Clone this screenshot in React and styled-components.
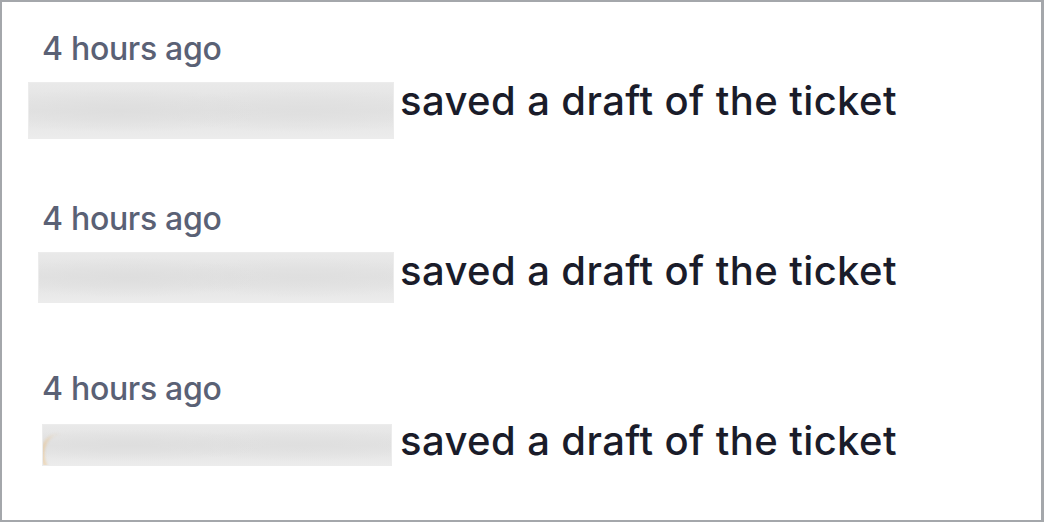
import styled, { createGlobalStyle } from 'styled-components'

const Global = createGlobalStyle`
  html, body {
    margin: 0;
    padding: 0;
    background: #ffffff;
  }
`

const Frame = styled.div`
  box-sizing: border-box;
  width: 1044px;
  height: 522px;
  border: 2px solid #a4a7ab;
  border-right-width: 3px;
  background: #fff;
  padding: 29px 0 0 40px;
  display: flex;
  flex-direction: column;
  overflow: hidden;
  font-family: Inter, "Noto Sans", sans-serif;
`

const Entry = styled.div`
  flex: none;
  height: 170px;
  display: flex;
  flex-direction: column;
`

const Time = styled.div`
  font-size: 32px;
  font-weight: 500;
  line-height: 36px;
  color: #5a6175;
  letter-spacing: -0.3px;
`

const Line = styled.div`
  display: flex;
  align-items: flex-start;
  height: 80px;
`

const Redacted = styled.div`
  position: relative;
  box-sizing: border-box;
  flex: none;
  width: ${p => p.$w}px;
  height: ${p => p.$h}px;
  margin-left: ${p => p.$x}px;
  margin-top: ${p => p.$y}px;
  margin-right: ${p => p.$gap}px;
  border: 1px solid #ececec;
  overflow: hidden;
  background:
    radial-gradient(ellipse 40% 40% at 25% 50%, #dedede, transparent),
    radial-gradient(ellipse 40% 40% at 75% 50%, #dfdfdf, transparent),
    linear-gradient(#e9e9e9, #e2e2e2 50%, #ececec);

  &::before {
    content: "";
    display: ${p => (p.$tint ? 'block' : 'none')};
    position: absolute;
    left: -2px;
    top: 9px;
    width: 34px;
    height: 40px;
    border-radius: 50%;
    border-left: 3px solid rgba(240, 172, 80, 0.45);
    filter: blur(1.5px);
  }
`

const Action = styled.div`
  font-size: 40px;
  font-weight: 500;
  line-height: 48px;
  color: #1a1c2a;
  letter-spacing: 0.4px;
  margin-top: 10px;
  white-space: nowrap;
`

const entries = [
  { x: -14, y: 15, w: 366, h: 57, gap: 6 },
  { x: -4, y: 15, w: 356, h: 51, gap: 6 },
  { x: 0, y: 17, w: 350, h: 42, gap: 8, tint: true },
]

export default function App() {
  return (
    <>
      <Global />
      <Frame>
        {entries.map((e, i) => (
          <Entry key={i}>
            <Time>4 hours ago</Time>
            <Line>
              <Redacted $x={e.x} $y={e.y} $w={e.w} $h={e.h} $gap={e.gap} $tint={e.tint} />
              <Action>saved a draft of the ticket</Action>
            </Line>
          </Entry>
        ))}
      </Frame>
    </>
  )
}
